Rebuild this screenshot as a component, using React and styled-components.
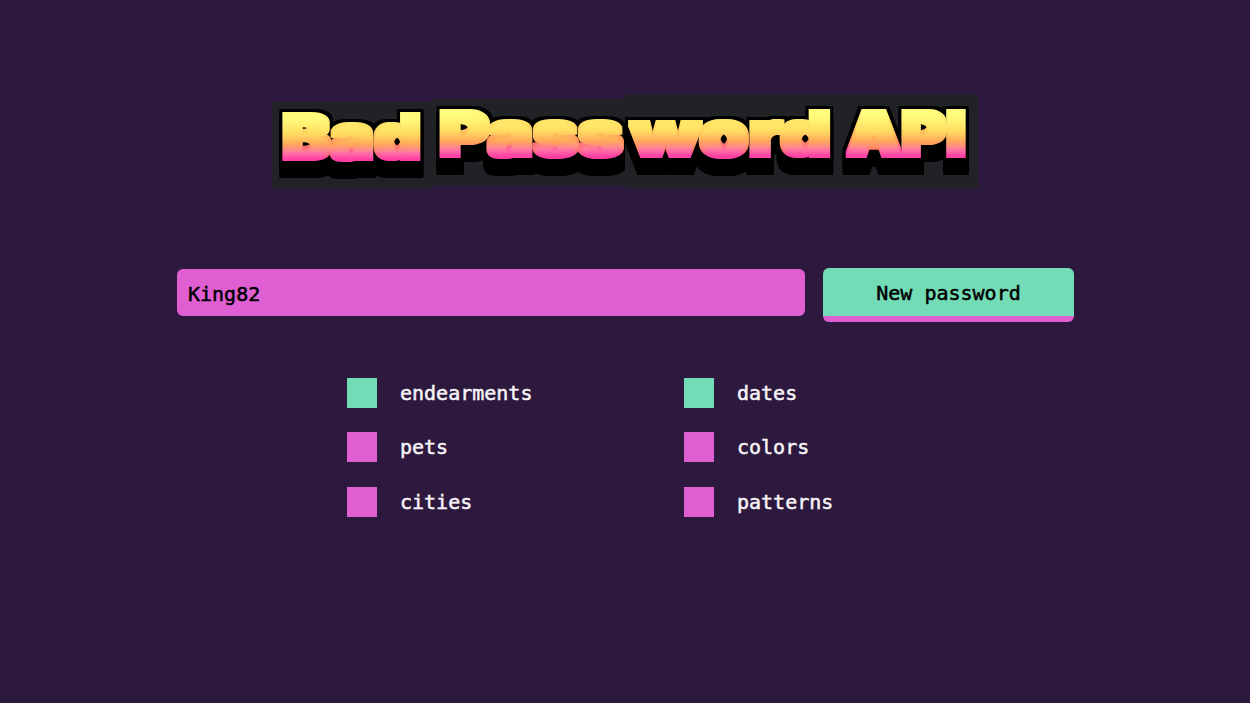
import React from "react";
import styled, { createGlobalStyle } from "styled-components";

const GlobalStyle = createGlobalStyle`
  html, body {
    margin: 0;
    height: 100%;
    background: #2c193d;
  }
`;

const Page = styled.main`
  height: 703px;
  overflow: hidden;
  font-family: "DejaVu Sans Mono", "Liberation Mono", monospace;
  font-size: 20px;
  -webkit-text-stroke: 0.5px currentColor;
`;

const Title = styled.h1`
  display: flex;
  height: 95px;
  margin: 0;
  padding: 95px 0 0 272px;
  -webkit-text-stroke: 0;
`;

const Word = styled.svg`
  display: block;
  flex: none;
  margin-top: ${(p) => p.$mt}px;
  background: #202225;
  overflow: visible;
`;

const WordText = styled.text`
  font-family: Inter, "Liberation Sans", sans-serif;
  font-size: 59px;
  font-weight: 900;
  -webkit-text-stroke: 0;
`;

const Controls = styled.div`
  display: flex;
  align-items: flex-start;
  gap: 18px;
  margin: 78px 0 0 177px;
`;

const PasswordField = styled.input`
  box-sizing: border-box;
  width: 628px;
  height: 47px;
  margin-top: 1px;
  padding: 2px 11px 0;
  border: 0;
  border-radius: 6px;
  outline: 0;
  background: #df5fd3;
  color: #000;
  font: inherit;
`;

const NewButton = styled.button`
  box-sizing: border-box;
  width: 251px;
  height: 54px;
  padding: 2px 0 0;
  border: 0;
  border-bottom: 6px solid #df5fd3;
  border-radius: 6px;
  background: #73dcb7;
  color: #000;
  font: inherit;
`;

const Options = styled.ul`
  display: grid;
  grid-template-columns: 337px 337px;
  grid-auto-rows: 30px;
  row-gap: 24.5px;
  list-style: none;
  margin: 55.6px 0 0 347px;
  padding: 0;
`;

const Option = styled.li`
  display: flex;
  align-items: center;
  gap: 23px;
  color: #f7f3f8;
`;

const Box = styled.span`
  flex: none;
  width: 30px;
  height: 30px;
  background: ${(p) => (p.$on ? "#73dcb7" : "#df5fd3")};
`;

const words = [
  { text: "Bad", w: 160, h: 86, mt: 7, x: 10, base: 56, len: 139 },
  { text: "Pass", w: 193, h: 86, mt: 4, x: 7, base: 56, len: 184 },
  { text: "word", w: 215, h: 93, mt: 0, x: 6, base: 60, len: 200 },
  { text: "API", w: 138, h: 93, mt: 0, x: 7, base: 60, len: 119 },
];

const options = [
  ["endearments", true],
  ["dates", true],
  ["pets", false],
  ["colors", false],
  ["cities", false],
  ["patterns", false],
];

// square dilation keeps the letters blocky, the stacked offsets make the extrusion
function BlockFilter({ id }) {
  const steps = [3, 6, 9, 12, 14];
  return (
    <filter id={id} x="-10%" y="-20%" width="120%" height="150%" colorInterpolationFilters="sRGB">
      <feMorphology in="SourceGraphic" operator="dilate" radius="3 3" result="face" />
      <feMorphology in="face" operator="dilate" radius="3 3" result="fat" />
      <feFlood floodColor="#000" result="ink" />
      <feComposite in="ink" in2="fat" operator="in" result="outline" />
      {steps.map((dy) => (
        <feOffset key={dy} in="outline" dy={dy} result={`drop${dy}`} />
      ))}
      <feMerge>
        {steps.map((dy) => (
          <feMergeNode key={dy} in={`drop${dy}`} />
        ))}
        <feMergeNode in="outline" />
        <feMergeNode in="face" />
      </feMerge>
    </filter>
  );
}

export default function App() {
  return (
    <Page>
      <GlobalStyle />
      <Title>
        {words.map((word) => {
          const grad = `grad-${word.text}`;
          const block = `block-${word.text}`;
          return (
            <Word key={word.text} $mt={word.mt} width={word.w} height={word.h}>
              <defs>
                <linearGradient id={grad} gradientUnits="userSpaceOnUse" x1="0" x2="0" y1={word.base - 44} y2={word.base + 3}>
                  <stop offset="0" stopColor="#ffff80" />
                  <stop offset="0.36" stopColor="#ffdc60" />
                  <stop offset="0.7" stopColor="#ff8a58" />
                  <stop offset="0.9" stopColor="#ff3fa6" />
                  <stop offset="1" stopColor="#ff3fa6" />
                </linearGradient>
                <BlockFilter id={block} />
              </defs>
              <WordText
                x={word.x}
                y={word.base}
                fill={`url(#${grad})`}
                filter={`url(#${block})`}
                textLength={word.len}
                lengthAdjust="spacingAndGlyphs"
              >
                {word.text}
              </WordText>
            </Word>
          );
        })}
      </Title>
      <Controls>
        <PasswordField readOnly value="King82" />
        <NewButton>New password</NewButton>
      </Controls>
      <Options>
        {options.map(([label, on]) => (
          <Option key={label}>
            <Box $on={on} />
            {label}
          </Option>
        ))}
      </Options>
    </Page>
  );
}
